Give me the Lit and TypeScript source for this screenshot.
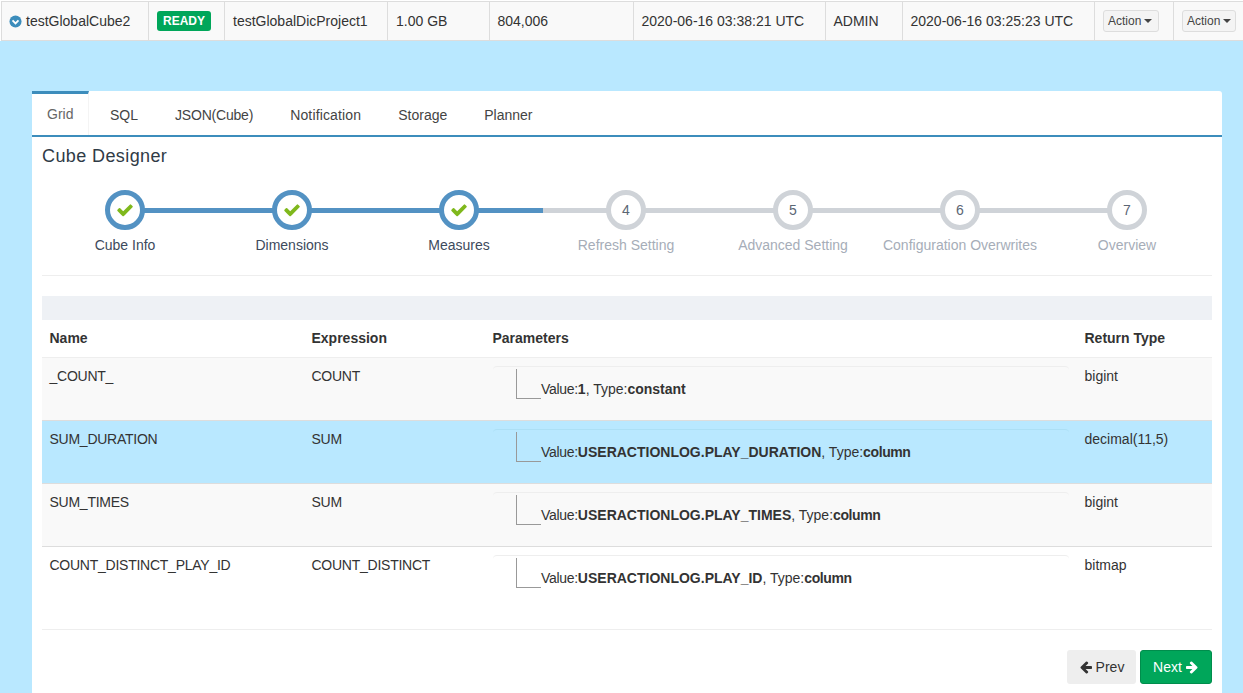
import { LitElement, html, css, svg } from "lit";
import { customElement } from "lit/decorators.js";

const CHECK = "M1671 566q0 40-28 68l-724 724-136 136q-28 28-68 28t-68-28l-136-136-362-362q-28-28-28-68t28-68l136-136q28-28 68-28t68 28l294 295 656-657q28-28 68-28t68 28l136 136q28 28 28 68z";
const LEFT = "M1664 896v128q0 53-32.5 90.5t-84.5 37.5h-704l293 294q38 36 38 90t-38 90l-75 76q-37 37-90 37-52 0-91-37l-651-652q-37-37-37-90 0-52 37-91l651-650q38-38 91-38 52 0 90 38l75 74q38 38 38 91t-38 91l-293 293h704q52 0 84.5 37.5t32.5 90.5z";
const RIGHT = "M1600 960q0 54-37 91l-651 651q-39 37-91 37-51 0-90-37l-75-75q-38-38-38-91t38-91l293-293h-704q-52 0-84.5-37.5t-32.5-90.5v-128q0-53 32.5-90.5t84.5-37.5h704l-293-294q-38-36-38-90t38-90l75-75q38-38 90-38 53 0 91 38l651 651q37 35 37 90z";
const icon = (d: string, cls: string) => html`<svg class=${cls} viewBox="0 0 1792 1792" aria-hidden="true">${svg`<path d=${d} fill="currentColor"></path>`}</svg>`;

const STEPS = ["Cube Info", "Dimensions", "Measures", "Refresh Setting", "Advanced Setting", "Configuration Overwrites", "Overview"];
const MEASURES = [
  { name: "_COUNT_", exp: "COUNT", value: "1", type: "constant", ret: "bigint", cls: "odd" },
  { name: "SUM_DURATION", exp: "SUM", value: "USERACTIONLOG.PLAY_DURATION", type: "column", ret: "decimal(11,5)", cls: "sel" },
  { name: "SUM_TIMES", exp: "SUM", value: "USERACTIONLOG.PLAY_TIMES", type: "column", ret: "bigint", cls: "odd" },
  { name: "COUNT_DISTINCT_PLAY_ID", exp: "COUNT_DISTINCT", value: "USERACTIONLOG.PLAY_ID", type: "column", ret: "bitmap", cls: "even" },
];

@customElement("app-root")
export class AppRoot extends LitElement {
  static styles = css`
    :host { display: block; height: 693px; overflow: hidden; background: #b9e8ff; font: 14px/20px "Liberation Sans", Arial, sans-serif; color: #333; }
    .top { background: #fff; padding: 1px 0 0 1px; }
    .cube { display: grid; grid-template-columns: 147px 76px 163px 102px 144px 192px 77px 192px 79px 69px; height: 40px; background: #f9f9f9; border-top: 1px solid #ddd; border-bottom: 1px solid #ddd; border-left: 1px solid #ddd; box-sizing: border-box; }
    .cube > div { border-right: 1px solid #ddd; padding: 0 8px; display: flex; align-items: center; white-space: nowrap; box-sizing: border-box; min-width: 0; }
    .cube > div:nth-child(n+5) { padding-left: 7.5px; }
    .cube > div:last-child { border-right: 0; }
    .cube > div.name { padding-left: 7px; }
    .chev { width: 13px; height: 13px; margin-right: 4px; flex: none; }
    .badge { background: #00a65a; color: #fff; font-weight: 700; font-size: 12px; line-height: 12px; border-radius: 3px; width: 54px; height: 20px; box-sizing: border-box; display: flex; align-items: center; justify-content: center; }
    .act { display: flex; align-items: center; box-sizing: border-box; height: 22px; width: 56px; border: 1px solid #ddd; border-radius: 3px; background: #f4f4f4; color: #444; font-size: 12px; line-height: 18px; padding: 0 4px; }
    .cube > div.actcell { padding: 0 8px; }
    .caret { width: 0; height: 0; border-top: 4px solid #444; border-left: 4px solid transparent; border-right: 4px solid transparent; margin-left: 3px; }

    .panel { margin: 50px 21px 0 32px; background: #fff; border-radius: 3px 3px 0 0; }
    .tabs { display: flex; height: 46px; box-sizing: border-box; border-bottom: 2px solid #3c8dbc; }
    .tab { margin-right: 37px; line-height: 48px; color: #444; white-space: nowrap; }
    .tab.json { letter-spacing: -0.2px; }
    .tab.notif { letter-spacing: 0.15px; }
    .tab.active { width: 57px; margin-right: 21px; box-sizing: border-box; padding: 0 15px; border-top: 3px solid #3c8dbc; border-right: 1px solid #f4f4f4; line-height: 41px; color: #666; }
    .body { padding: 0 10px; }
    h3 { margin: 0; font-size: 18px; font-weight: 400; line-height: 20px; padding-top: 9px; height: 53px; box-sizing: border-box; color: #2f3b46; letter-spacing: 0.4px; }
    .steps { display: grid; grid-template-columns: repeat(7, 167px); height: 85px; margin-left: -0.5px; border-bottom: 1px solid #eee; }
    .step { position: relative; display: flex; flex-direction: column; align-items: center; }
    .step::before { content: ""; position: absolute; left: 50%; width: 100%; top: 18px; height: 5px; background: #cfd3d8; }
    .step.done::before { background: #5392c3; }
    .step.half::after { content: ""; position: absolute; left: 50%; width: 50%; top: 18px; height: 5px; background: #5392c3; }
    .step:last-child::before { display: none; }
    .dot { position: relative; z-index: 1; width: 40px; height: 40px; box-sizing: border-box; border-radius: 50%; background: #fff; border: 5px solid #cfd3d8; display: flex; align-items: center; justify-content: center; color: #5b6674; font-size: 14px; }
    .done .dot, .half .dot { border-color: #5392c3; }
    .check { width: 18px; height: 18px; color: #7fb81c; }
    .label { margin-top: 5px; color: #3d4a5c; white-space: nowrap; }
    .todo .label { color: #a6adb8; }

    .bar { height: 24px; background: #eef1f5; margin-top: 20px; }
    .row { display: grid; grid-template-columns: 262px 181px 592px 135px; }
    .row > div { padding: 8px 8px 8px 7.5px; min-width: 0; }
    .head { height: 38px; box-sizing: border-box; font-weight: 700; border-bottom: 1px solid #eee; }
    .m { height: 63px; box-sizing: border-box; border-bottom: 1px solid #ddd; }
    .m.odd { background: #f9f9f9; }
    .m.sel { background: #b9e8ff; }
    .m.even { border-bottom: 0; background: #fff; }
    .m.sel .param { border-top-color: #acdff5; }
    .cap { letter-spacing: -0.25px; }
    .row > .pcell { padding-left: 8px; }
    .param { border-top: 1px solid #eee; border-radius: 4px 4px 0 0; height: 46px; box-sizing: border-box; padding: 2px 0 0 23px; display: flex; }
    .tree { width: 25px; height: 30px; box-sizing: border-box; border-left: 1px solid #999; border-bottom: 1px solid #999; flex: none; }
    .ptext { margin-top: 10px; white-space: nowrap; }
    .vl { letter-spacing: -0.3px; }
    .col { letter-spacing: -0.4px; }
    hr { border: 0; border-top: 1px solid #eee; margin: 19px 0 0; }
    .nav { display: flex; justify-content: flex-end; gap: 4px; padding-top: 20px; padding-bottom: 40px; }
    .btn { display: flex; align-items: center; justify-content: center; gap: 3px; height: 34px; box-sizing: border-box; border-radius: 3px; }
    .prev { width: 69px; background: #eee; color: #333; }
    .next { width: 72px; background: #00a65a; color: #fff; border: 1px solid #008d4c; }
    .arrow { width: 14px; height: 14px; }
  `;

  render() {
    return html`
      <div class="top"><div class="cube">
        <div class="name">
          <svg class="chev" viewBox="0 0 14 14" aria-hidden="true"><circle cx="7" cy="7" r="6.5" fill="#3c8dbc"></circle><path d="M3.8 5.8 7 9l3.2-3.2" fill="none" stroke="#fff" stroke-width="2"></path></svg>
          testGlobalCube2
        </div>
        <div><span class="badge">READY</span></div>
        <div>testGlobalDicProject1</div>
        <div>1.00 GB</div>
        <div>804,006</div>
        <div>2020-06-16 03:38:21 UTC</div>
        <div>ADMIN</div>
        <div>2020-06-16 03:25:23 UTC</div>
        <div class="actcell"><span class="act">Action<i class="caret"></i></span></div>
        <div class="actcell"><span class="act">Action<i class="caret"></i></span></div>
      </div></div>
      <div class="panel">
        <div class="tabs">
          <div class="tab active">Grid</div>
          <div class="tab">SQL</div>
          <div class="tab json">JSON(Cube)</div>
          <div class="tab notif">Notification</div>
          <div class="tab">Storage</div>
          <div class="tab">Planner</div>
        </div>
        <div class="body">
          <h3>Cube Designer</h3>
          <div class="steps">
            ${STEPS.map((s, i) => html`
              <div class="step ${i < 2 ? "done" : i === 2 ? "half" : "todo"}">
                <div class="dot">${i < 3 ? icon(CHECK, "check") : i + 1}</div>
                <div class="label">${s}</div>
              </div>`)}
          </div>
          <div class="bar"></div>
          <div class="row head"><div>Name</div><div>Expression</div><div>Parameters</div><div>Return Type</div></div>
          ${MEASURES.map((m) => html`
            <div class="row m ${m.cls}">
              <div class="cap">${m.name}</div>
              <div class="cap">${m.exp}</div>
              <div class="pcell"><div class="param"><span class="tree"></span><span class="ptext"><span class="vl">Value:</span><b>${m.value}</b>, Type:<b class=${m.type === "column" ? "col" : ""}>${m.type}</b></span></div></div>
              <div>${m.ret}</div>
            </div>`)}
          <hr />
          <div class="nav">
            <div class="btn prev">${icon(LEFT, "arrow")}Prev</div>
            <div class="btn next">Next${icon(RIGHT, "arrow")}</div>
          </div>
        </div>
      </div>
    `;
  }
}
